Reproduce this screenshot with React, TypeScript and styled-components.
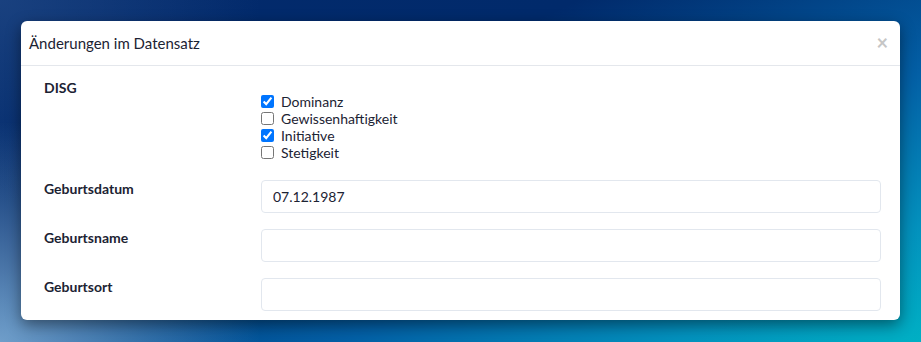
import React, { FunctionComponent } from 'react';
import styled, { createGlobalStyle } from 'styled-components';

const GlobalStyle = createGlobalStyle`
  html, body {
    margin: 0;
    padding: 0;
    width: 921px;
    height: 342px;
    overflow: hidden;
  }
  body {
    font-family: Lato, "Noto Sans", sans-serif;
    color: #1c2333;
  }
  * {
    box-sizing: border-box;
  }
`;

type Option = { label: string; checked: boolean };

const disgOptions: Option[] = [
  { label: 'Dominanz', checked: true },
  { label: 'Gewissenhaftigkeit', checked: false },
  { label: 'Initiative', checked: true },
  { label: 'Stetigkeit', checked: false },
];

const textFields = [
  { label: 'Geburtsdatum', value: '07.12.1987' },
  { label: 'Geburtsname', value: '' },
  { label: 'Geburtsort', value: '' },
];

let App: FunctionComponent = () => {
  return (
    <>
      <GlobalStyle />
      <Backdrop>
        <Modal>
          <ModalHeader>
            <ModalTitle>Änderungen im Datensatz</ModalTitle>
            <CloseButton aria-label="Schließen">×</CloseButton>
          </ModalHeader>

          <ModalBody>
            <FormRow>
              <FieldLabel>DISG</FieldLabel>
              <CheckList>
                {disgOptions.map((o) => (
                  <CheckItem key={o.label}>
                    <CheckBox type="checkbox" defaultChecked={o.checked} />
                    {o.label}
                  </CheckItem>
                ))}
              </CheckList>
            </FormRow>

            {textFields.map((f) => (
              <FormRow key={f.label}>
                <FieldLabel>{f.label}</FieldLabel>
                <TextInput type="text" defaultValue={f.value} />
              </FormRow>
            ))}
          </ModalBody>
        </Modal>
      </Backdrop>
    </>
  );
};

export default App;

const Backdrop = styled.div`
  width: 921px;
  height: 342px;
  padding: 21px 21px 0 21px;
  background:
    radial-gradient(ellipse 260px 220px at 0% 100%, rgba(130, 175, 215, 0.85), rgba(130, 175, 215, 0) 100%),
    radial-gradient(ellipse 260px 200px at 0% 0%, rgba(40, 80, 140, 0.6), rgba(40, 80, 140, 0) 100%),
    linear-gradient(155deg, #032a6c 0%, #012a6b 35%, #035fa5 65%, #0391bd 85%, #00b0c4 100%);
`;

const Modal = styled.div`
  width: 879px;
  height: 299px;
  background: #fff;
  border-radius: 6px;
  box-shadow: 0 5px 15px rgba(0, 0, 0, 0.45);
  display: flex;
  flex-flow: column;
  overflow: hidden;
`;

const ModalHeader = styled.div`
  height: 45px;
  display: flex;
  align-items: center;
  justify-content: space-between;
  padding: 0 12px 0 8px;
  border-bottom: 1px solid #e4e7ec;
`;

const ModalTitle = styled.h4`
  margin: 0;
  font-size: 15px;
  font-weight: 400;
  line-height: 20px;
  color: #1c2333;
`;

const CloseButton = styled.button`
  border: 0;
  background: none;
  padding: 0;
  margin-top: -3px;
  font-family: Lato, sans-serif;
  font-size: 20px;
  font-weight: 700;
  line-height: 20px;
  color: #c6c6c6;
  cursor: pointer;
`;

const ModalBody = styled.div`
  display: flex;
  flex-flow: column;
  gap: 16px;
  padding: 13px 19px 0 23px;
`;

const FormRow = styled.div`
  display: grid;
  grid-template-columns: 217px 1fr;
  align-items: start;
`;

const FieldLabel = styled.label`
  margin-top: -1px;
  font-size: 14px;
  font-weight: 700;
  line-height: 20px;
  color: #1c2333;
`;

const CheckList = styled.div`
  display: flex;
  flex-flow: column;
  padding-top: 14px;
  margin-bottom: 3px;
`;

const CheckItem = styled.label`
  display: flex;
  align-items: center;
  height: 17px;
  font-size: 14px;
  line-height: 17px;
  color: #1c2333;
`;

const CheckBox = styled.input`
  width: 13px;
  height: 13px;
  margin: 0 7px 0 0;
`;

const TextInput = styled.input`
  width: 620px;
  height: 33px;
  border: 1px solid #e2e7ee;
  border-radius: 4px;
  padding: 0 11px;
  font-family: Lato, sans-serif;
  font-size: 14px;
  color: #1c2333;
  outline: none;
`;
